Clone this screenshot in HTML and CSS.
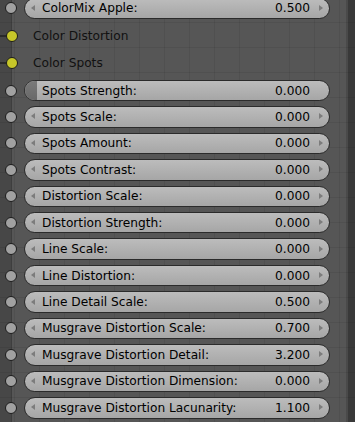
FILE: index.html
```html
<!DOCTYPE html>
<html>
<head>
<meta charset="utf-8">
<link rel="stylesheet" href="styles.css">
</head>
<body>
<div class="canvas">
  <div class="rows">
    <div class="row top">
      <span class="gap"></span><span class="socket float"></span>
      <div class="slider"><span class="arr left"></span><span class="lbl">ColorMix Apple:</span><span class="val">0.500</span><span class="arr right"></span></div>
    </div>
    <div class="row top">
      <span class="wire"></span><span class="socket color"></span>
      <span class="plain">Color Distortion</span>
    </div>
    <div class="row top">
      <span class="wire"></span><span class="socket color"></span>
      <span class="plain">Color Spots</span>
    </div>
    <div class="row">
      <span class="gap"></span><span class="socket float"></span>
      <div class="slider factor"><span class="cap"></span><span class="lbl">Spots Strength:</span><span class="val">0.000</span></div>
    </div>
    <div class="row">
      <span class="gap"></span><span class="socket float"></span>
      <div class="slider"><span class="arr left"></span><span class="lbl">Spots Scale:</span><span class="val">0.000</span><span class="arr right"></span></div>
    </div>
    <div class="row">
      <span class="gap"></span><span class="socket float"></span>
      <div class="slider"><span class="arr left"></span><span class="lbl">Spots Amount:</span><span class="val">0.000</span><span class="arr right"></span></div>
    </div>
    <div class="row">
      <span class="gap"></span><span class="socket float"></span>
      <div class="slider"><span class="arr left"></span><span class="lbl">Spots Contrast:</span><span class="val">0.000</span><span class="arr right"></span></div>
    </div>
    <div class="row">
      <span class="gap"></span><span class="socket float"></span>
      <div class="slider"><span class="arr left"></span><span class="lbl">Distortion Scale:</span><span class="val">0.000</span><span class="arr right"></span></div>
    </div>
    <div class="row">
      <span class="gap"></span><span class="socket float"></span>
      <div class="slider"><span class="arr left"></span><span class="lbl">Distortion Strength:</span><span class="val">0.000</span><span class="arr right"></span></div>
    </div>
    <div class="row">
      <span class="gap"></span><span class="socket float"></span>
      <div class="slider"><span class="arr left"></span><span class="lbl">Line Scale:</span><span class="val">0.000</span><span class="arr right"></span></div>
    </div>
    <div class="row">
      <span class="gap"></span><span class="socket float"></span>
      <div class="slider"><span class="arr left"></span><span class="lbl">Line Distortion:</span><span class="val">0.000</span><span class="arr right"></span></div>
    </div>
    <div class="row">
      <span class="gap"></span><span class="socket float"></span>
      <div class="slider"><span class="arr left"></span><span class="lbl">Line Detail Scale:</span><span class="val">0.500</span><span class="arr right"></span></div>
    </div>
    <div class="row">
      <span class="gap"></span><span class="socket float"></span>
      <div class="slider"><span class="arr left"></span><span class="lbl">Musgrave Distortion Scale:</span><span class="val">0.700</span><span class="arr right"></span></div>
    </div>
    <div class="row">
      <span class="gap"></span><span class="socket float"></span>
      <div class="slider"><span class="arr left"></span><span class="lbl">Musgrave Distortion Detail:</span><span class="val">3.200</span><span class="arr right"></span></div>
    </div>
    <div class="row">
      <span class="gap"></span><span class="socket float"></span>
      <div class="slider"><span class="arr left"></span><span class="lbl">Musgrave Distortion Dimension:</span><span class="val">0.000</span><span class="arr right"></span></div>
    </div>
    <div class="row">
      <span class="gap"></span><span class="socket float"></span>
      <div class="slider"><span class="arr left"></span><span class="lbl">Musgrave Distortion Lacunarity:</span><span class="val">1.100</span><span class="arr right"></span></div>
    </div>
  </div>
</div>
</body>
</html>
```
FILE: styles.css
```css
html, body {
  margin: 0;
  padding: 0;
}
body {
  width: 355px;
  height: 422px;
  overflow: hidden;
  font-family: "DejaVu Sans", sans-serif;
  font-size: 12.2px;
  color: #000;
}
.canvas {
  width: 355px;
  height: 422px;
  overflow: hidden;
  background-color: #565656;
  background-image:
    linear-gradient(to right, rgba(0,0,0,0.07) 1px, transparent 1px),
    linear-gradient(to bottom, rgba(0,0,0,0.07) 1px, transparent 1px),
    linear-gradient(to right, #474747 0, #474747 11px, #3e3e3e 11px, #3e3e3e 12px, #565656 12px, #565656 346px, #4a4a4a 346px, #4a4a4a 348px, #393939 348px);
  background-size: 25px 25px, 25px 25px, 100% 100%;
  background-position: 14px 22px, 14px 22px, 0 0;
}
.rows {
  display: flex;
  flex-direction: column;
  margin-top: -5.5px;
}
.row {
  display: flex;
  align-items: center;
  height: 26.44px;
  flex: none;
}
.row.top {
  height: 27.6px;
}
.gap {
  width: 5.5px;
  flex: none;
}
.wire {
  width: 6px;
  height: 2px;
  background: #2a2a2a;
  flex: none;
}
.socket {
  width: 10px;
  height: 10px;
  border-radius: 50%;
  border: 1px solid #1c1c1c;
  flex: none;
  margin-left: -0.5px;
}
.socket.float {
  background: #a1a1a1;
}
.socket.color {
  background: #c7c729;
}
.plain {
  margin-left: 15.5px;
  color: #111;
}
.slider {
  margin-left: 7px;
  width: 306px;
  height: 21.5px;
  box-sizing: border-box;
  border: 1px solid #2b2b2b;
  border-radius: 11px;
  background: linear-gradient(to bottom, #bcbcbc, #a6a6a6);
  display: flex;
  align-items: center;
  position: relative;
  overflow: hidden;
}
.lbl {
  margin-left: 17px;
  flex: 1;
  white-space: nowrap;
}
.val {
  margin-right: 19px;
}
.arr {
  position: absolute;
  top: 50%;
  margin-top: -3.5px;
  width: 0;
  height: 0;
  border-top: 3.5px solid transparent;
  border-bottom: 3.5px solid transparent;
}
.arr.left {
  left: 6px;
  border-right: 4px solid #7c7c7c;
}
.arr.right {
  right: 6px;
  border-left: 4px solid #7c7c7c;
}
.factor .cap {
  position: absolute;
  left: 0;
  top: 0;
  bottom: 0;
  width: 12px;
  background: linear-gradient(to bottom, #7a7a7a, #686868);
}
.factor .lbl {
  position: relative;
}
```
